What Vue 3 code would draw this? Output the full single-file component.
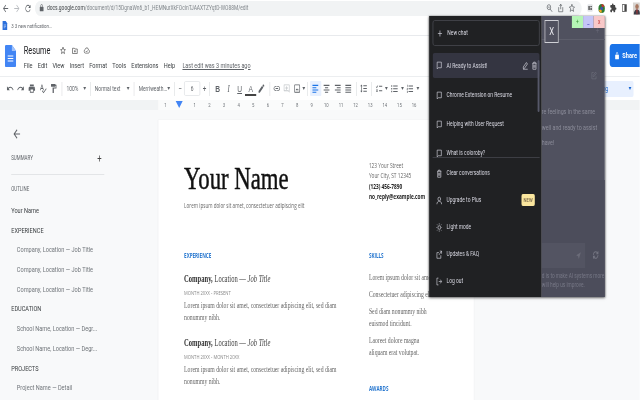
<script setup>
const P = {
  undo: 'M12.5 8c-2.65 0-5.05.99-6.9 2.6L2 7v9h9l-3.62-3.62c1.39-1.16 3.16-1.88 5.12-1.88 3.54 0 6.55 2.31 7.6 5.5l2.37-.78C21.08 11.03 17.15 8 12.5 8z',
  redo: 'M18.4 10.6C16.55 8.99 14.15 8 11.5 8c-4.65 0-8.58 3.03-9.96 7.22L3.9 16c1.05-3.19 4.05-5.5 7.6-5.5 1.95 0 3.73.72 5.12 1.88L13 16h9V7l-3.6 3.6z',
  print: 'M19 8H5c-1.66 0-3 1.34-3 3v6h4v4h12v-4h4v-6c0-1.66-1.34-3-3-3zm-3 11H8v-5h8v5zm3-7c-.55 0-1-.45-1-1s.45-1 1-1 1 .45 1 1-.45 1-1 1zm-1-9H6v4h12V3z',
  spell: 'M12.45 16h2.09L9.43 3H7.57L2.46 16h2.09l1.12-3h5.64l1.14 3zm-6.02-5L8.5 5.48 10.57 11H6.43zm15.16.59l-8.09 8.09L9.83 16l-1.41 1.41 5.09 5.09L23 13l-1.41-1.41z',
  paint: 'M18 4V3c0-.55-.45-1-1-1H5c-.55 0-1 .45-1 1v4c0 .55.45 1 1 1h12c.55 0 1-.45 1-1V6h1v4H9v11c0 .55.45 1 1 1h2c.55 0 1-.45 1-1v-9h8V4h-3z',
  pen: 'M3 17.25V21h3.75L17.81 9.94l-3.75-3.75L3 17.25zM20.71 7.04a1 1 0 000-1.41l-2.34-2.34a1 1 0 00-1.41 0l-1.83 1.83 3.75 3.75 1.83-1.83z',
  link: 'M3.9 12c0-1.71 1.39-3.1 3.1-3.1h4V7H7c-2.76 0-5 2.24-5 5s2.24 5 5 5h4v-1.9H7c-1.71 0-3.1-1.39-3.1-3.1zM8 13h8v-2H8v2zm9-6h-4v1.9h4c1.71 0 3.1 1.39 3.1 3.1s-1.39 3.1-3.1 3.1h-4V17h4c2.76 0 5-2.24 5-5s-2.24-5-5-5z',
  comment: 'M20 3H4a1 1 0 00-1 1v13a1 1 0 001 1h13l4 3V4a1 1 0 00-1-1zm-1 14.5L17.5 16H5V5h14v12.5zM11 7h2v3h3v2h-3v3h-2v-3H8v-2h3V7z',
  image: 'M19 3H5a2 2 0 00-2 2v14a2 2 0 002 2h14a2 2 0 002-2V5a2 2 0 00-2-2zm0 16H5V5h14v14zM7 16l3-4 2 2.5 2-2.5 3 4H7z',
  left: 'M3 4h18v2.4H3zM3 9h12v2.4H3zM3 14h18v2.4H3zM3 19h12v2.4H3z',
  center: 'M3 4h18v2.4H3zM7 9h10v2.4H7zM3 14h18v2.4H3zM7 19h10v2.4H7z',
  right: 'M3 4h18v2.4H3zM9 9h12v2.4H9zM3 14h18v2.4H3zM9 19h12v2.4H9z',
  justify: 'M3 4h18v2.4H3zM3 9h18v2.4H3zM3 14h18v2.4H3zM3 19h18v2.4H3z',
  spacing: 'M6 7h2.5L5 3.5 1.5 7H4v10H1.5L5 20.5 8.5 17H6V7zm5-2v2h11V5H11zm0 14h11v-2H11v2zm0-6h11v-2H11v2z',
  check: 'M3 7l2 2 3-4 1.3 1-4.2 5.4L2 8.4 3 7zM12 6h10v2H12zM3 14h5v5H3v-5zm1.5 1.5v2h2v-2zM12 16h10v2H12z',
  bullets: 'M2 5h3v3H2zM2 11h3v3H2zM2 17h3v3H2zM8 5.5h14v2H8zM8 11.5h14v2H8zM8 17.5h14v2H8z',
  numbers: 'M3 4h2v5H3.6V5.4H3zM2.5 11h3v1.2L4 14h1.5v1h-3v-1.1L4 12H2.5zM2.5 17h3v5h-3v-1h1.6v-.9H3v-1h1.1V18H2.5zM8 5.5h14v2H8zM8 11.5h14v2H8zM8 17.5h14v2H8z'
}
const toolbar = [
  { k: 'cell', d: P.undo }, { k: 'cell', d: P.redo }, { k: 'cell', d: P.print }, { k: 'cell', d: P.spell }, { k: 'cell', d: P.paint },
  { k: 'sep' },
  { k: 'sel w1', t: '100%' }, { k: 'sep' },
  { k: 'sel w2', t: 'Normal text' }, { k: 'sep' },
  { k: 'sel w3', t: 'Merriweath...' }, { k: 'sep' },
  { k: 'sym', t: '−' }, { k: 'box', t: '6' }, { k: 'sym', t: '+' }, { k: 'sep' },
  { k: 'cell fmt', t: 'B', c: 'b' }, { k: 'cell fmt', t: 'I', c: 'i' }, { k: 'cell fmt', t: 'U', c: 'u' }, { k: 'cell fmt', t: 'A', c: 'a' }, { k: 'cell', d: P.pen },
  { k: 'sep' },
  { k: 'cell n', d: P.link }, { k: 'cell n faint', d: P.comment }, { k: 'cell n', d: P.image }, { k: 'caret thin' }, { k: 'sep' },
  { k: 'cell on', d: P.left }, { k: 'cell', d: P.center }, { k: 'cell', d: P.right }, { k: 'cell', d: P.justify }, { k: 'sep' },
  { k: 'cell n', d: P.spacing }, { k: 'sep' },
  { k: 'cell n', d: P.check }, { k: 'caret' },
  { k: 'cell n', d: P.bullets }, { k: 'caret' },
  { k: 'cell n', d: P.numbers }, { k: 'caret' }
]
const rulerMarks = ['1', '', '1', '2', '3', '4', '5', '6', '7', '8', '9', '10', '11', '12', '13', '14', '15', '16']
const menu = ['File', 'Edit', 'View', 'Insert', 'Format', 'Tools', 'Extensions', 'Help']
const outline = [
  { t: 'Your Name', c: 'top' }, { t: 'EXPERIENCE', c: 'top' },
  { t: 'Company, Location — Job Title', c: 'sub' }, { t: 'Company, Location — Job Title', c: 'sub' }, { t: 'Company, Location — Job Title', c: 'sub' },
  { t: 'EDUCATION', c: 'top' },
  { t: 'School Name, Location — Degr...', c: 'sub' }, { t: 'School Name, Location — Degr...', c: 'sub' },
  { t: 'PROJECTS', c: 'top' }, { t: 'Project Name — Detail', c: 'sub' }
]
const chats = ['Chrome Extension on Resume', 'Helping with User Request', 'What is coloroby?']
</script>

<template>
  <div class="stage">
    <div class="topbar">
      <svg class="nav" viewBox="0 0 24 24"><path d="M20 11H7.8l5.6-5.6L12 4l-8 8 8 8 1.4-1.4L7.8 13H20z" fill="#5f6368"/></svg>
      <svg class="nav" viewBox="0 0 24 24"><path d="M4 11h12.2l-5.6-5.6L12 4l8 8-8 8-1.4-1.4 5.6-5.6H4z" fill="#b9bcc0"/></svg>
      <svg class="nav" viewBox="0 0 24 24"><path d="M17.65 6.35A8 8 0 1019.73 14h-2.08a6 6 0 11-1.41-6.24L13 11h7V4z" fill="#5f6368"/></svg>
      <div class="url">
        <svg class="lock" viewBox="0 0 24 24"><path d="M18 8h-1V6a5 5 0 00-10 0v2H6a2 2 0 00-2 2v10a2 2 0 002 2h12a2 2 0 002-2V10a2 2 0 00-2-2zM9 6a3 3 0 016 0v2H9z" fill="#5f6368"/></svg>
        <span class="host">docs.google.com</span><span class="path">/document/d/15DgnaWn6_b1_HEMNurXkFOcinTJAAXTZYqtD-WO88M/edit</span>
        <div class="url-icons">
          <svg viewBox="0 0 24 24"><circle cx="10" cy="10" r="6" fill="none" stroke="#5f6368" stroke-width="2"/><path d="M14 14l7 7M7 10h6" stroke="#5f6368" stroke-width="2"/></svg>
          <svg viewBox="0 0 24 24"><path d="M5 10v11h14V10M12 15V3m-4 4l4-4 4 4" fill="none" stroke="#5f6368" stroke-width="2"/></svg>
          <svg viewBox="0 0 24 24"><path d="M12 3l2.7 6 6.3.6-4.8 4.2 1.5 6.4L12 17l-5.700 3.200 1.500-6.400L3 9.600 9.300 9z" fill="none" stroke="#5f6368" stroke-width="2"/></svg>
        </div>
      </div>
      <div class="exts">
        <svg viewBox="0 0 24 24"><rect x="3" y="3" width="18" height="18" rx="3" fill="#e3e5e8"/><path d="M6 7h5v10H6zM13 7h5v3h-5zM13 12h5v5h-5z" fill="#555"/></svg>
        <svg class="colorful" viewBox="0 0 24 24"><circle cx="12" cy="12" r="10" fill="#2e7d32"/><path d="M12 2a10 10 0 019 6h-9z" fill="#d32f2f"/><path d="M3 16a10 10 0 009 6v-9z" fill="#f9a825"/><circle cx="12" cy="12" r="4" fill="#3f51b5"/></svg>
        <svg viewBox="0 0 24 24"><path d="M20.500 11H19V7a2 2 0 00-2-2h-4V3.500a2.500 2.500 0 00-5 0V5H4a2 2 0 00-2 2v3.800h1.500a2.700 2.700 0 010 5.400H2V20a2 2 0 002 2h3.800v-1.500a2.700 2.700 0 015.400 0V22H17a2 2 0 002-2v-4h1.500a2.500 2.500 0 000-5z" fill="#444"/></svg>
        <svg viewBox="0 0 24 24"><path d="M4 3h16v18H4zM6 5v14h6V5z" fill="#444" fill-rule="evenodd"/></svg>
        <svg class="avatar" viewBox="0 0 24 24"><rect width="24" height="24" fill="#d8d4d0"/><circle cx="12" cy="8" r="5" fill="#a87860"/><path d="M3 24c0-7 4-10 9-10s9 3 9 10z" fill="#3a3d48"/><path d="M10 14h4l-1 10h-2z" fill="#a33"/></svg>
      </div>
    </div>

    <div class="bookmarks">
      <svg class="bm-doc" viewBox="0 0 12 16"><path d="M0 0h8l4 4v12H0z" fill="#2b6fdc"/><path d="M3 7h6M3 9.500h6M3 12h4" stroke="#fff"/></svg>
      <span>3 3 new notification...</span>
    </div>

    <div class="docbar">
      <svg class="doc-logo" viewBox="0 0 16 22"><path d="M1.500 0H10l6 6v14.500a1.500 1.500 0 01-1.500 1.500h-13A1.500 1.500 0 010 20.500v-19A1.500 1.500 0 011.500 0z" fill="#4285f4"/><path d="M10 0l6 6h-6z" fill="#a1c2fa"/><path d="M4 11h8M4 13.500h8M4 16h8" stroke="#fff" stroke-width="1.200"/></svg>
      <div class="doc-titles">
        <div class="doc-name">
          <span class="resume">Resume</span>
          <svg viewBox="0 0 24 24"><path d="M12 3l2.700 6 6.300.6-4.800 4.200 1.500 6.400L12 17l-5.700 3.200 1.500-6.400L3 9.600 9.300 9z" fill="none" stroke="#444" stroke-width="2"/></svg>
          <svg viewBox="0 0 24 24"><path d="M3 6h7l2 2h9v12H3zM12 11v6M9 14h6" fill="none" stroke="#444" stroke-width="2"/></svg>
          <svg viewBox="0 0 24 24"><path d="M7 19a5 5 0 01-1-9.900 6.500 6.500 0 0112.500 1A4.500 4.500 0 0118 19zM9 14l2 2 4-4" fill="none" stroke="#444" stroke-width="2"/></svg>
        </div>
        <div class="menu">
          <span v-for="m in menu" :key="m">{{ m }}</span>
          <a class="last-edit">Last edit was 3 minutes ago</a>
        </div>
      </div>
      <div class="share">
        <svg viewBox="0 0 24 24"><path d="M18 8h-1V6a5 5 0 00-10 0v2H6a2 2 0 00-2 2v10a2 2 0 002 2h12a2 2 0 002-2V10a2 2 0 00-2-2zM9 6a3 3 0 016 0v2H9z" fill="#fff"/></svg>
        <span>Share</span>
      </div>
    </div>

    <div class="toolbar">
      <template v-for="(it, i) in toolbar" :key="i">
        <span v-if="it.k === 'sep'" class="sep"></span>
        <span v-else-if="it.k.startsWith('caret')" :class="it.k"><i class="tri"></i></span>
        <span v-else-if="it.k.startsWith('sel')" :class="it.k"><em>{{ it.t }}</em><i class="tri"></i></span>
        <span v-else :class="[it.k, it.c]">
          <svg v-if="it.d" viewBox="0 0 24 24"><path :d="it.d"/></svg>
          <template v-else>{{ it.t }}</template>
        </span>
      </template>
      <span class="mode"><em>Editing</em><i class="tri blue"></i></span>
    </div>

    <div class="ruler">
      <div class="ruler-in">
        <span v-for="(r, i) in rulerMarks" :key="i" class="tick">{{ r }}</span>
        <i class="marker"></i>
      </div>
    </div>

    <div class="main">
      <aside class="outline">
        <svg class="back" viewBox="0 0 24 24"><path d="M20 11H7.800l5.600-5.600L12 4l-8 8 8 8 1.400-1.400L7.800 13H20z" fill="#5f6368"/></svg>
        <div class="sum"><span>SUMMARY</span><b>+</b></div>
        <div class="rule"></div>
        <div class="out-h">OUTLINE</div>
        <div v-for="(o, i) in outline" :key="i" :class="['o', o.c]">{{ o.t }}</div>
      </aside>

      <section class="page">
        <div class="col-l">
          <h1 class="name"><span>Your Name</span></h1>
          <p class="tag">Lorem ipsum dolor sit amet, consectetuer adipiscing elit</p>
          <h2 class="sec first">EXPERIENCE</h2>
          <h3 class="job"><b>Company,</b> Location — <i>Job Title</i></h3>
          <div class="when">MONTH 20XX - PRESENT</div>
          <p class="body">Lorem ipsum dolor sit amet, consectetuer adipiscing elit, sed diam<br>nonummy nibh.</p>
          <h3 class="job second"><b>Company,</b> Location — <i>Job Title</i></h3>
          <div class="when">MONTH 20XX - MONTH 20XX</div>
          <p class="body">Lorem ipsum dolor sit amet, consectetuer adipiscing elit, sed diam<br>nonummy nibh.</p>
        </div>
        <div class="col-r">
          <div class="addr">
            <div>123 Your Street</div>
            <div>Your City, ST 12345</div>
            <div class="st">(123) 456-7890</div>
            <div class="st">no_reply@example.com</div>
          </div>
          <h2 class="sec skills">SKILLS</h2>
          <p class="s s1">Lorem ipsum dolor sit amet.</p>
          <p class="s">Consectetuer adipiscing elit.</p>
          <p class="s">Sed diam nonummy nibh<br>euismod tincidunt.</p>
          <p class="s">Laoreet dolore magna<br>aliquam erat volutpat.</p>
          <h2 class="sec awards">AWARDS</h2>
        </div>
      </section>
    </div>

    <div class="panel">
      <div class="side">
        <div class="newchat">
          <svg viewBox="0 0 24 24"><path d="M12 4v16M4 12h16"/></svg>
          <span>New chat</span>
        </div>
        <div class="chats">
          <div class="chat active">
            <svg viewBox="0 0 24 24"><path d="M4 3h16v15H8l-4 3z"/></svg>
            <span>AI Ready to Assist!</span>
            <div class="acts">
              <svg viewBox="0 0 24 24"><path d="M4 20v-4L16 4l4 4L8 20zM3 22h18"/></svg>
              <svg viewBox="0 0 24 24"><path d="M4 6h16M9 6V3h6v3M6 6v16h12V6M10 10v8M14 10v8"/></svg>
            </div>
          </div>
          <div v-for="c in chats" :key="c" class="chat">
            <svg viewBox="0 0 24 24"><path d="M4 3h16v15H8l-4 3z"/></svg>
            <span>{{ c }}</span>
          </div>
          <i class="thumb"></i>
        </div>
        <div class="items">
          <div class="item">
            <svg viewBox="0 0 24 24"><path d="M4 6h16M9 6V3h6v3M6 6v16h12V6M10 10v8M14 10v8"/></svg>
            <span>Clear conversations</span>
          </div>
          <div class="item">
            <svg viewBox="0 0 24 24"><circle cx="12" cy="8" r="5"/><path d="M3 22c0-5 4-8 9-8s9 3 9 8"/></svg>
            <span>Upgrade to Plus</span>
            <b class="new">NEW</b>
          </div>
          <div class="item">
            <svg viewBox="0 0 24 24"><circle cx="12" cy="12" r="5"/><path d="M12 1v3M12 20v3M1 12h3M20 12h3M4 4l2 2M18 18l2 2M4 20l2-2M18 6l2-2"/></svg>
            <span>Light mode</span>
          </div>
          <div class="item">
            <svg viewBox="0 0 24 24"><path d="M18 14v8H3V7h8M14 3h7v7M21 3l-10 10"/></svg>
            <span>Updates &amp; FAQ</span>
          </div>
          <div class="item">
            <svg viewBox="0 0 24 24"><path d="M9 3H3v18h6M10 12h11M16 7l5 5-5 5"/></svg>
            <span>Log out</span>
          </div>
        </div>
      </div>

      <div class="chatpane">
        <div class="pane-top">
          <button class="closer">X</button>
          <svg class="faint-plus" viewBox="0 0 24 24"><path d="M12 4v16M4 12h16"/></svg>
        </div>
        <svg class="pane-edit" viewBox="0 0 24 24"><path d="M11 4H4v17h16v-7M9 15v-3l9-9 3 3-9 9z"/></svg>
        <div class="answer">
          <div>re feelings in the same</div>
          <div>well and ready to assist</div>
          <div>have!</div>
        </div>
        <div class="bottom">
          <div class="composer">
            <div class="inputbox">
              <svg viewBox="0 0 24 24"><path d="M21 3L3 11l7 3 3 7z"/></svg>
            </div>
            <svg class="regen" viewBox="0 0 24 24"><path d="M4 12a8 8 0 0113-6l3 3M20 3v6h-6M20 12a8 8 0 01-13 6l-3-3M4 21v-6h6"/></svg>
          </div>
          <div class="foot">
            <div>d is to make AI systems more</div>
            <div>will help us improve.</div>
          </div>
        </div>
      </div>

      <div class="winbtns">
        <span class="w-g">+</span><span class="w-b">_</span><span class="w-r">x</span>
      </div>
    </div>
  </div>
</template>

<style scoped>
.stage { position: relative; width: 914px; height: 400px; display: flex; flex-direction: column; overflow: hidden; background: #fff; transform: scaleX(.7); transform-origin: 0 0; filter: blur(.3px); font-family: Roboto, "Liberation Sans", sans-serif; color: #3c4043; }
p, h1, h2, h3 { margin: 0; font-weight: normal; }
svg { display: block; flex: none; }

.topbar { height: 16px; flex: none; display: flex; align-items: center; background: #fff; }
.nav { width: 16px; height: 11px; }
.url { width: 781px; height: 15px; margin-left: 2px; background: #f1f3f4; border-radius: 8px; display: flex; align-items: center; padding-left: 2px; font-size: 7px; white-space: nowrap; box-sizing: border-box; flex: none; }
.lock { width: 9px; height: 8px; margin: 0 3px 0 3px; }
.host { color: #3c4043; }
.path { color: #80868b; }
.url-icons { margin-left: auto; display: flex; gap: 4px; margin-right: 8px; }
.url-icons svg { width: 12px; height: 10px; }
.exts { display: flex; align-items: center; gap: 4px; margin-left: 6px; }
.exts svg { width: 12px; height: 10px; }
.exts .colorful { width: 13px; height: 11px; }
.exts .avatar { width: 12px; height: 13px; margin-left: 2px; }

.bookmarks { height: 20px; flex: none; display: flex; align-items: center; gap: 5px; padding-left: 3px; font-size: 6.200px; color: #5f6368; background: #fff; border-bottom: 1px solid #e8eaed; box-sizing: border-box; }
.bm-doc { width: 8px; height: 9px; }

.docbar { height: 40px; flex: none; display: flex; align-items: flex-start; background: #fff; padding-left: 7px; box-sizing: border-box; }
.doc-logo { width: 16px; height: 22px; margin-top: 9px; }
.doc-titles { margin-left: 11px; display: flex; flex-direction: column; }
.doc-name { display: flex; align-items: center; height: 14px; margin-top: 7px; gap: 7px; }
.doc-name svg { width: 10px; height: 9px; }
.resume { font-size: 10.500px; color: #202124; margin-right: 6px; }
.menu { display: flex; gap: 7.400px; align-items: center; height: 12px; margin-top: 2px; font-size: 8px; color: #3c4043; white-space: nowrap; }
.last-edit { margin-left: 3px; font-size: 7.800px; color: #5f6368; text-decoration: underline; }
.share { margin-left: auto; margin-top: 8px; width: 43px; height: 23px; background: #1a73e8; border-radius: 4px 0 0 4px; color: #fff; font-size: 8px; font-weight: 700; display: flex; align-items: center; gap: 3px; padding-left: 6px; box-sizing: border-box; }
.share svg { width: 9px; height: 8px; }

.toolbar { height: 24px; flex: none; display: flex; align-items: center; padding-left: 6.400px; background: #fff; border-top: 1px solid #eceef0; box-sizing: border-box; font-size: 7px; color: #5f6368; white-space: nowrap; }
.cell { width: 15.700px; height: 15px; display: flex; align-items: center; justify-content: center; flex: none; }
.cell.n { width: 14.300px; }
.cell svg { width: 11px; height: 11px; fill: #5f6368; }
.cell.faint svg { fill: #c4c7ca; }
.cell.on { background: #e8f0fe; border-radius: 1px; }
.cell.on svg { fill: #1a73e8; }
.fmt { font-family: "Liberation Sans", sans-serif; font-size: 9.500px; color: #5f6368; }
.b { font-weight: 700; }
.i { font-style: italic; font-family: "Liberation Serif", serif; }
.u { text-decoration: underline; }
.a { border-bottom: 2px solid #444; height: 11px; margin-top: 1px; }
.sep { width: 1px; height: 14px; margin: 0 3px; background: #e0e2e4; flex: none; }
.sel { display: flex; align-items: center; justify-content: space-between; flex: none; height: 15px; padding: 0 3px; box-sizing: border-box; }
.sel em, .mode em { font-style: normal; }
.w1 { width: 33.700px; }
.w2 { width: 55.700px; }
.w3 { width: 51px; }
.tri { display: block; width: 0; height: 0; border: 2px solid transparent; border-top: 3px solid #5f6368; border-bottom: 0; }
.caret { width: 8px; display: flex; justify-content: center; flex: none; }
.caret.thin { width: 4.500px; }
.sym { width: 8px; text-align: center; font-size: 9px; flex: none; }
.box { width: 22.900px; margin: 0 2px; text-align: center; height: 15px; line-height: 14px; border: 1px solid #e4e6e8; border-radius: 2px; box-sizing: border-box; flex: none; }
.mode { margin-left: auto; margin-right: 9px; width: 86px; height: 16px; background: #e8f0fe; border-radius: 2px; color: #1967d2; display: flex; align-items: center; justify-content: flex-end; gap: 29px; padding-right: 3px; box-sizing: border-box; flex: none; font-size: 7.500px; }
.tri.blue { border-top-color: #1967d2; }

.ruler { height: 10px; flex: none; background: #f1f3f4; }
.ruler-in { position: relative; margin-left: 226px; width: 451px; height: 10px; display: flex; background: #fafbfb; font-size: 6px; line-height: 10px; color: #70757a; }
.tick { width: 20.900px; text-align: center; flex: none; background: radial-gradient(circle, #b4b7ba .6px, transparent .8px) 0 0 / 5.200px 10px; }
.marker { position: absolute; left: 25px; top: 1px; width: 0; height: 0; border: 5px solid transparent; border-top: 7px solid #4285f4; border-bottom: 0; }

.main { flex: 1; min-height: 0; display: flex; background: #f8f9fa; }
.outline { width: 226px; flex: none; box-sizing: border-box; padding: 17px 0 0 16px; font-size: 8px; }
.back { width: 14px; height: 14px; margin-left: 1px; }
.sum { width: 132px; height: 10px; margin-top: 12px; display: flex; justify-content: space-between; align-items: center; font-size: 6.400px; color: #5f6368; }
.sum b { font-size: 11px; font-weight: 400; color: #444; margin-right: 3px; }
.rule { width: 133px; height: 1px; margin-top: 11px; background: #e3e5e7; }
.out-h { font-size: 6.400px; color: #5f6368; height: 10px; line-height: 10px; margin-top: 9px; }
.o { height: 19.700px; line-height: 19.700px; white-space: nowrap; }
.out-h + .o { margin-top: 7px; }
.top { color: #3c4043; }
.sub { padding-left: 8px; color: #70757a; }

.page { width: 451px; flex: none; margin-top: 10px; height: 290px; background: #fff; box-sizing: border-box; padding-left: 37px; display: flex; box-shadow: 0 0 1px #dfe1e4; overflow: hidden; }
.col-l { width: 264px; flex: none; }
.col-r { flex: 1; min-width: 0; }
.name { margin-top: 38px; height: 40px; line-height: 40px; font-family: "Liberation Serif", serif; font-size: 32.500px; color: #111; white-space: nowrap; -webkit-text-stroke: .5px #111; }
.tag { margin-top: 3px; height: 10px; line-height: 10px; font-family: "Open Sans", sans-serif; font-size: 6.600px; color: #666; white-space: nowrap; }
.sec { font-family: "Open Sans", sans-serif; font-size: 6.500px; font-weight: 700; color: #2a79d0; height: 10px; line-height: 10px; }
.sec.first { margin-top: 40px; }
.job { margin-top: 12px; height: 12px; line-height: 12px; font-family: "Liberation Serif", serif; font-size: 9.400px; color: #444; white-space: nowrap; }
.job b { color: #333; }
.job.second { margin-top: 13px; }
.when { margin-top: 4px; height: 8px; line-height: 8px; font-family: "Open Sans", sans-serif; font-size: 5.900px; color: #888; white-space: nowrap; }
.body { margin-top: 3px; line-height: 12px; font-family: "Liberation Serif", serif; font-size: 8.200px; color: #666; white-space: nowrap; }
.addr { margin-top: 41px; font-family: "Open Sans", sans-serif; font-size: 6.800px; line-height: 10.400px; color: #666; white-space: nowrap; }
.st { font-weight: 700; color: #222; font-size: 6.800px; }
.sec.skills { margin-top: 48.400px; }
.s { margin-top: 5px; line-height: 12px; font-family: "Liberation Serif", serif; font-size: 8.200px; color: #666; white-space: nowrap; }
.s1 { margin-top: 11px; }
.sec.awards { margin-top: 25px; }

.panel { position: absolute; left: 613px; top: 16px; width: 251px; height: 281px; display: flex; box-shadow: 0 1px 3px rgba(0,0,0,.5), 0 0 2px rgba(0,0,0,.4); font-size: 7px; color: #d9d9e3; }
.side { width: 161px; flex: none; background: #202123; display: flex; flex-direction: column; padding: 4px 3px 0 5px; box-sizing: border-box; }
.side svg { width: 9px; height: 9px; fill: none; stroke: #d9d9e3; stroke-width: 2; }
.newchat { height: 26px; flex: none; border: 1px solid #45464d; border-radius: 3px; display: flex; align-items: center; gap: 6px; padding-left: 5px; box-sizing: border-box; }
.chats { position: relative; height: 104px; margin-top: 7px; overflow: hidden; flex: none; }
.chat { height: 25px; display: flex; align-items: center; gap: 6px; padding-left: 5px; margin-bottom: 4px; white-space: nowrap; border-radius: 3px; }
.chat.active { background: #343541; margin-bottom: 4.500px; }
.chat.active + .chat { margin-top: 4px; }
.acts { margin-left: auto; display: flex; gap: 4px; padding-right: 3px; }
.thumb { position: absolute; right: 0; top: 7px; width: 3px; height: 52px; background: #565869; border-radius: 2px; }
.items { border-top: 1px solid #3d3e44; flex: 1; display: flex; flex-direction: column; padding-top: 1.500px; }
.item { height: 27px; flex: none; display: flex; align-items: center; gap: 6px; padding-left: 5px; white-space: nowrap; }
.new { margin-left: auto; margin-right: 7px; width: 19px; height: 12px; border-radius: 2px; background: #fae69e; color: #79684a; font-size: 6px; font-weight: 500; line-height: 12px; text-align: center; }

.chatpane { flex: 1; min-width: 0; background: #50515f; display: flex; flex-direction: column; color: #8b8c99; white-space: nowrap; font-size: 7.600px; }
.pane-top { height: 24px; flex: none; box-sizing: border-box; border-bottom: 1px solid #5d5e6b; padding-left: 4px; display: flex; justify-content: space-between; align-items: flex-start; }
.closer { margin-top: 4px; width: 20px; height: 23px; padding: 0; border: 1.500px solid #cfd0d6; background: #50515f; color: #e8e8ee; font-family: Roboto, sans-serif; font-size: 11px; line-height: 18px; position: relative; z-index: 1; }
.faint-plus { width: 7px; height: 7px; margin: 11px 7px 0 0; fill: none; stroke: #6a6b78; stroke-width: 2; }
.pane-edit { width: 9px; height: 9px; margin: 31px 0 0 70px; fill: none; stroke: #6e6f7c; stroke-width: 2; }
.answer { margin-top: 24px; line-height: 15.500px; }
.bottom { margin-top: 29px; flex: 1; background: #4c4d5b; padding-top: 63px; box-sizing: border-box; }
.composer { height: 25px; display: flex; align-items: center; }
.inputbox { width: 62px; height: 25px; background: #535462; display: flex; align-items: center; justify-content: flex-end; padding-right: 5px; box-sizing: border-box; }
.inputbox svg { width: 9px; height: 11px; fill: #6a6b78; }
.regen { width: 10px; height: 10px; margin-left: 10px; fill: none; stroke: #747582; stroke-width: 2.500; }
.foot { margin-top: 4.500px; font-size: 6.800px; line-height: 9px; color: #777886; }

.winbtns { position: absolute; right: 0; top: 0; display: flex; height: 12px; font-size: 7px; line-height: 12px; text-align: center; }
.winbtns span { width: 15.700px; }
.w-g { background: #b5f5b5; color: #2f8a2f; }
.w-b { background: #c5c5f7; color: #3a3ab0; }
.w-r { background: #f8c8c8; color: #c03030; }
</style>

<style>
html, body { overflow: hidden; }
</style>
